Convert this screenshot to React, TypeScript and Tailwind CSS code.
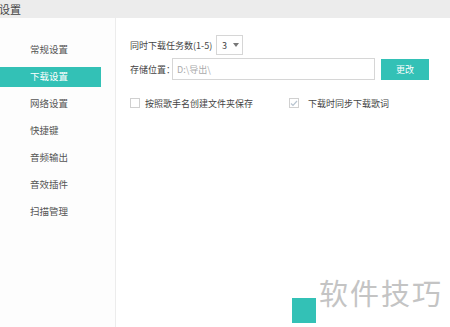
import React from "react";

const font = { fontFamily: '"Noto Sans CJK SC", "Noto Sans", sans-serif' };

export default function App() {
  const items = ["常规设置", "下载设置", "网络设置", "快捷键", "音频输出", "音效插件", "扫描管理"];
  return (
    <div className="relative w-[450px] h-[327px] overflow-hidden bg-white flex flex-col" style={font}>
      <div className="h-[18px] bg-[#ececec] flex items-center text-[11px] text-[#444] leading-none shrink-0">
        <span className="-ml-[1px]">设置</span>
      </div>
      <div className="flex flex-1">
        <div className="w-[116px] border-r border-[#ececec] bg-[#fdfdfd] pt-[22px] flex flex-col gap-[7px] shrink-0">
          {items.map((t, i) => (
            <div
              key={t}
              className={
                "h-[20px] w-[101px] flex items-center pl-[30px] text-[9.5px] leading-none " +
                (i === 1 ? "bg-[#33c1b6] text-white" : "text-[#555]")
              }
            >
              {t}
            </div>
          ))}
        </div>
        <div className="flex-1 pl-[14px] pt-[17px] flex flex-col text-[9px] text-[#444] leading-none whitespace-nowrap">
          <div className="flex items-center h-[20px]">
            <span className="w-[86px]">同时下载任务数(1-5)</span>
            <div className="w-[27px] h-[20px] border border-[#d6d6d6] flex items-center justify-between pl-[5px] pr-[3px]">
              <span>3</span>
              <svg width="6" height="4" viewBox="0 0 6 4"><path d="M0 0h6L3 4z" fill="#777" /></svg>
            </div>
          </div>
          <div className="flex items-center h-[22px] mt-[3px]">
            <span className="w-[42px]">存储位置：</span>
            <div className="w-[203px] h-[22px] border border-[#d6d6d6] flex items-center pl-[4px] text-[#aaa]">D:\导出\</div>
            <div className="ml-[6px] w-[48px] h-[21px] bg-[#33c1b6] text-white flex items-center justify-center">更改</div>
          </div>
          <div className="flex items-center mt-[17px] h-[12px]">
            <div className="w-[10px] h-[10px] border border-[#d0d0d0] bg-white shrink-0"></div>
            <span className="ml-[5px] w-[144px]">按照歌手名创建文件夹保存</span>
            <div className="w-[10px] h-[10px] border border-[#d0d0d0] bg-white flex items-center justify-center shrink-0">
              <svg width="8" height="7" viewBox="0 0 8 7"><path d="M1 3.5l2 2L7 1" stroke="#b8c4d0" strokeWidth="1.2" fill="none" /></svg>
            </div>
            <span className="ml-[9px]">下载时同步下载歌词</span>
          </div>
        </div>
      </div>
      <div className="absolute left-[292px] top-[298px] w-[24px] h-[25px] bg-[#33c1b6]"></div>
      <div className="absolute left-[316px] top-[272px] w-[134px] h-[55px] bg-white flex items-start pt-[6px] pl-[3px] text-[29px] leading-none text-[#c4c4c4] tracking-[2px]">
        软件技巧
      </div>
    </div>
  );
}
